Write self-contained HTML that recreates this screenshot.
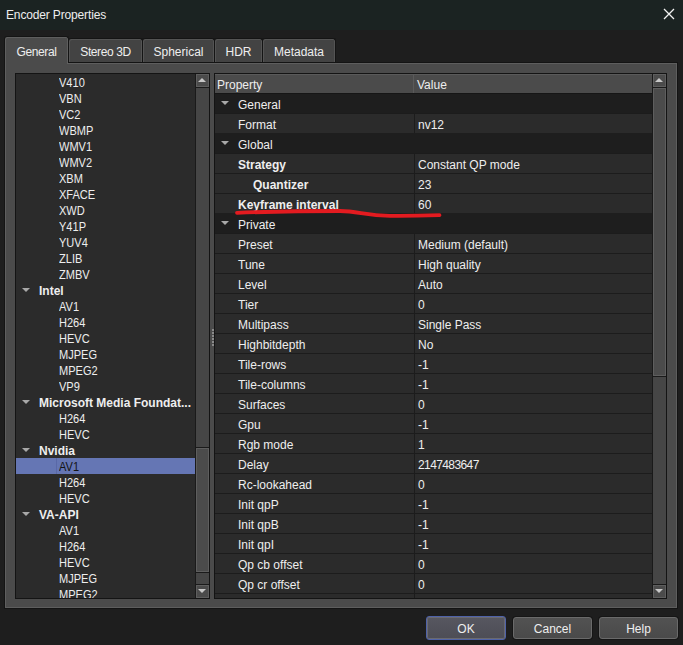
<!DOCTYPE html><html><head><meta charset="utf-8"><style>*{margin:0;padding:0;box-sizing:border-box}
html,body{width:683px;height:645px;overflow:hidden;background:#1e1e1e;font-family:"Liberation Sans",sans-serif;font-size:12px;color:#eeeeee;position:relative}
#title{position:absolute;left:0;top:0;width:683px;height:30px;background:#1b2322}
.ttext{position:absolute;left:6px;top:8px;line-height:14px;font-size:12px;letter-spacing:-0.15px;color:#eeeeee}
.close{position:absolute;left:663px;top:8px}
.tab{position:absolute;top:38px;height:25px;background:#434343;border:1px solid #141414;border-bottom:none;border-radius:3px 3px 0 0;box-shadow:inset 1px 1px 0 #545454,inset -1px 0 0 #545454}
.tab span{position:absolute;left:0;right:0;top:6px;text-align:center;line-height:14px;color:#eeeeee}
.tab.sel{top:36px;height:26px;background:#4b4b4b;box-shadow:inset 1px 1px 0 #5e5e5e,inset -1px 0 0 #5e5e5e;z-index:3}
.tab.sel span{top:8px}
#pane{position:absolute;left:4px;top:62px;width:674px;height:547px;background:#4b4b4b;border:1px solid #141414;box-shadow:inset 1px 1px 0 #5e5e5e,inset -1px -1px 0 #5e5e5e}
.tabfix{position:absolute;left:5px;top:62px;width:63px;height:2px;background:#4b4b4b;z-index:4;box-shadow:inset 1px 0 0 #5e5e5e,inset -1px 0 0 #5e5e5e}
#tree{position:absolute;left:15px;top:73px;width:195px;height:526px;background:#2b2b2b;border:1px solid #141414}
.tclip{position:absolute;left:0;top:0;width:179px;height:524px;overflow:hidden}
.ti{position:absolute;left:0;width:179px;height:16px}
.ti span{position:absolute;left:43px;top:2px;line-height:14px;white-space:nowrap;transform:scaleX(0.92);transform-origin:0 0}
.ti.cat span{left:23px;font-weight:bold;transform:none}
.ti .tri{position:absolute;left:6px;top:6px}
.selrow{background:#6576b4}
.selrow span{color:#141414}
.selrow .focus{position:absolute;left:40px;top:0;width:1px;height:16px;background:#5868a6}
.vs{position:absolute;width:14px;background:#464646;border-left:1px solid #1a1a1a}
.tvs{left:179px;top:0;height:524px}
.vs .btn{position:absolute;left:0;width:13px;height:13px;background:#4b4b4b;border:1px solid #5e5e5e}
.vs .btn svg{position:absolute;left:1px;top:3px}
.vs .up{top:0;box-shadow:0 1px 0 #1a1a1a}
.vs .dn{bottom:0;box-shadow:0 -1px 0 #1a1a1a}
.vs .thumb{position:absolute;left:0;width:13px;background:#4b4b4b;border:1px solid #5e5e5e;box-shadow:0 -1px 0 #1a1a1a,0 1px 0 #1a1a1a}
#table{position:absolute;left:214px;top:73px;width:453px;height:526px;background:#2b2b2b;border:1px solid #141414}
.hdr{position:absolute;left:0;top:0;width:437px;height:19px;background:#4b4b4b;box-shadow:inset 0 1px 0 #5a5a5a,0 1px 0 #161616;z-index:2}
.hdr span{position:absolute;top:4px;line-height:14px;white-space:nowrap}
.h1{left:2px}.h2{left:202px}
.hdr .hsep{left:198px;top:1px;width:1px;height:18px;background:#5a5a5a}
.rclip{position:absolute;left:0;top:19px;width:437px;height:505px;overflow:hidden}
.row{position:absolute;left:0;width:437px;height:20px;background:#2b2b2b;border-top:1px solid #1c1c1c}
.row span.p{position:absolute;left:23px;top:4px;line-height:14px;white-space:nowrap}
.row span.v{position:absolute;left:203px;top:4px;line-height:14px;white-space:nowrap}
.row .vsep{position:absolute;left:199px;top:0;width:1px;height:19px;background:#1c1c1c}
.row.bold span.p{font-weight:bold}
.row.grp{background:#1e1e1e;border-top:1px solid #1e1e1e}
.row.grp .tri{position:absolute;left:6px;top:7px}
.rvs{left:437px;top:0;height:524px}
#red{position:absolute;left:0;top:0;z-index:10}
.pb{position:absolute;top:617px;width:79px;height:22px;background:linear-gradient(#525252,#4a4a4a);border:1px solid #6a6a6a;border-radius:3px;box-shadow:0 0 0 1px #161616}
.pb span{position:absolute;left:0;right:0;top:4px;text-align:center;line-height:14px;color:#eeeeee}
.pb.def{top:616px;height:24px;width:80px;border-color:#4f62a8;background:linear-gradient(#575760,#4d4d55);box-shadow:inset 0 0 0 1px #6a6a70}
.pb.def span{top:5px}
.dot{position:absolute;left:212px;width:2px;height:2px;background:#8a8a8a;z-index:5}
</style></head><body>
<div id="title"><span class="ttext">Encoder Properties</span><svg class="close" width="12" height="12" viewBox="0 0 12 12"><path d="M1 1L11 11M11 1L1 11" stroke="#f2f2f2" stroke-width="1.3" fill="none"/></svg></div>
<div class="tab sel" style="left:4px;width:65px"><span style="letter-spacing:-0.4px">General</span></div>
<div class="tab" style="left:68px;width:75px"><span style="letter-spacing:-0.4px">Stereo 3D</span></div>
<div class="tab" style="left:142px;width:73px"><span>Spherical</span></div>
<div class="tab" style="left:214px;width:49px"><span>HDR</span></div>
<div class="tab" style="left:262px;width:74px"><span>Metadata</span></div>
<div id="pane"></div>
<div class="tabfix"></div>
<div id="tree"><div class="tclip">
<div class="ti" style="top:0px"><span>V410</span></div>
<div class="ti" style="top:16px"><span>VBN</span></div>
<div class="ti" style="top:32px"><span>VC2</span></div>
<div class="ti" style="top:48px"><span>WBMP</span></div>
<div class="ti" style="top:64px"><span>WMV1</span></div>
<div class="ti" style="top:80px"><span>WMV2</span></div>
<div class="ti" style="top:96px"><span>XBM</span></div>
<div class="ti" style="top:112px"><span>XFACE</span></div>
<div class="ti" style="top:128px"><span>XWD</span></div>
<div class="ti" style="top:144px"><span>Y41P</span></div>
<div class="ti" style="top:160px"><span>YUV4</span></div>
<div class="ti" style="top:176px"><span>ZLIB</span></div>
<div class="ti" style="top:192px"><span>ZMBV</span></div>
<div class="ti cat" style="top:208px"><svg class="tri" width="8" height="4" viewBox="0 0 8 4"><path d="M0 0H8L4 4Z" fill="#a8a8a8"/></svg><span>Intel</span></div>
<div class="ti" style="top:224px"><span>AV1</span></div>
<div class="ti" style="top:240px"><span>H264</span></div>
<div class="ti" style="top:256px"><span>HEVC</span></div>
<div class="ti" style="top:272px"><span>MJPEG</span></div>
<div class="ti" style="top:288px"><span>MPEG2</span></div>
<div class="ti" style="top:304px"><span>VP9</span></div>
<div class="ti cat" style="top:320px"><svg class="tri" width="8" height="4" viewBox="0 0 8 4"><path d="M0 0H8L4 4Z" fill="#a8a8a8"/></svg><span>Microsoft Media Foundat...</span></div>
<div class="ti" style="top:336px"><span>H264</span></div>
<div class="ti" style="top:352px"><span>HEVC</span></div>
<div class="ti cat" style="top:368px"><svg class="tri" width="8" height="4" viewBox="0 0 8 4"><path d="M0 0H8L4 4Z" fill="#a8a8a8"/></svg><span>Nvidia</span></div>
<div class="ti selrow" style="top:384px"><span class="focus"></span><span>AV1</span></div>
<div class="ti" style="top:400px"><span>H264</span></div>
<div class="ti" style="top:416px"><span>HEVC</span></div>
<div class="ti cat" style="top:432px"><svg class="tri" width="8" height="4" viewBox="0 0 8 4"><path d="M0 0H8L4 4Z" fill="#a8a8a8"/></svg><span>VA-API</span></div>
<div class="ti" style="top:448px"><span>AV1</span></div>
<div class="ti" style="top:464px"><span>H264</span></div>
<div class="ti" style="top:480px"><span>HEVC</span></div>
<div class="ti" style="top:496px"><span>MJPEG</span></div>
<div class="ti" style="top:512px"><span>MPEG2</span></div>
</div>
<div class="vs tvs"><div class="btn up"><svg width="8" height="4" viewBox="0 0 8 4"><path d="M0 4H8L4 0Z" fill="#c8c8c8"/></svg></div><div class="thumb" style="top:374px;height:124px"></div><div class="btn dn"><svg width="8" height="4" viewBox="0 0 8 4"><path d="M0 0H8L4 4Z" fill="#c8c8c8"/></svg></div></div>
</div>
<div class="dot" style="top:329px"></div>
<div class="dot" style="top:332px"></div>
<div class="dot" style="top:335px"></div>
<div class="dot" style="top:338px"></div>
<div class="dot" style="top:341px"></div>
<div class="dot" style="top:344px"></div>
<div id="table"><div class="hdr"><span class="h1">Property</span><span class="hsep"></span><span class="h2">Value</span></div><div class="rclip">
<div class="row grp" style="top:0px"><svg class="tri" width="8" height="4" viewBox="0 0 8 4"><path d="M0 0H8L4 4Z" fill="#a8a8a8"/></svg><span class="p">General</span></div>
<div class="row" style="top:20px"><span class="p">Format</span><span class="vsep"></span><span class="v">nv12</span></div>
<div class="row grp" style="top:40px"><svg class="tri" width="8" height="4" viewBox="0 0 8 4"><path d="M0 0H8L4 4Z" fill="#a8a8a8"/></svg><span class="p">Global</span></div>
<div class="row bold" style="top:60px"><span class="p">Strategy</span><span class="vsep"></span><span class="v">Constant QP mode</span></div>
<div class="row bold" style="top:80px"><span class="p" style="left:38px">Quantizer</span><span class="vsep"></span><span class="v">23</span></div>
<div class="row bold" style="top:100px"><span class="p">Keyframe interval</span><span class="vsep"></span><span class="v">60</span></div>
<div class="row grp" style="top:120px"><svg class="tri" width="8" height="4" viewBox="0 0 8 4"><path d="M0 0H8L4 4Z" fill="#a8a8a8"/></svg><span class="p">Private</span></div>
<div class="row" style="top:140px"><span class="p">Preset</span><span class="vsep"></span><span class="v">Medium (default)</span></div>
<div class="row" style="top:160px"><span class="p">Tune</span><span class="vsep"></span><span class="v">High quality</span></div>
<div class="row" style="top:180px"><span class="p">Level</span><span class="vsep"></span><span class="v">Auto</span></div>
<div class="row" style="top:200px"><span class="p">Tier</span><span class="vsep"></span><span class="v">0</span></div>
<div class="row" style="top:220px"><span class="p">Multipass</span><span class="vsep"></span><span class="v">Single Pass</span></div>
<div class="row" style="top:240px"><span class="p">Highbitdepth</span><span class="vsep"></span><span class="v">No</span></div>
<div class="row" style="top:260px"><span class="p">Tile-rows</span><span class="vsep"></span><span class="v">-1</span></div>
<div class="row" style="top:280px"><span class="p">Tile-columns</span><span class="vsep"></span><span class="v">-1</span></div>
<div class="row" style="top:300px"><span class="p">Surfaces</span><span class="vsep"></span><span class="v">0</span></div>
<div class="row" style="top:320px"><span class="p">Gpu</span><span class="vsep"></span><span class="v">-1</span></div>
<div class="row" style="top:340px"><span class="p">Rgb mode</span><span class="vsep"></span><span class="v">1</span></div>
<div class="row" style="top:360px"><span class="p">Delay</span><span class="vsep"></span><span class="v"><span style="letter-spacing:-0.6px">2147483647</span></span></div>
<div class="row" style="top:380px"><span class="p">Rc-lookahead</span><span class="vsep"></span><span class="v">0</span></div>
<div class="row" style="top:400px"><span class="p">Init qpP</span><span class="vsep"></span><span class="v">-1</span></div>
<div class="row" style="top:420px"><span class="p">Init qpB</span><span class="vsep"></span><span class="v">-1</span></div>
<div class="row" style="top:440px"><span class="p">Init qpI</span><span class="vsep"></span><span class="v">-1</span></div>
<div class="row" style="top:460px"><span class="p">Qp cb offset</span><span class="vsep"></span><span class="v">0</span></div>
<div class="row" style="top:480px"><span class="p">Qp cr offset</span><span class="vsep"></span><span class="v">0</span></div>
<div class="row" style="top:500px"><span class="p"></span><span class="vsep"></span><span class="v"></span></div>
</div>
<div class="vs rvs"><div class="btn up"><svg width="8" height="4" viewBox="0 0 8 4"><path d="M0 4H8L4 0Z" fill="#c8c8c8"/></svg></div><div class="thumb" style="top:14px;height:288px"></div><div class="btn dn"><svg width="8" height="4" viewBox="0 0 8 4"><path d="M0 0H8L4 4Z" fill="#c8c8c8"/></svg></div></div>
</div>
<svg id="red" width="683" height="645" viewBox="0 0 683 645"><path d="M237 212.8 C260 212 300 211 340 211 C358 211 365 215.5 390 215.8 C410 216 425 215.6 439.5 215.2" stroke="#e31b20" stroke-width="3.8" fill="none" stroke-linecap="round"/></svg>
<div class="pb def" style="left:426px"><span>OK</span></div>
<div class="pb" style="left:513px"><span>Cancel</span></div>
<div class="pb" style="left:599px"><span>Help</span></div>
</body></html>
